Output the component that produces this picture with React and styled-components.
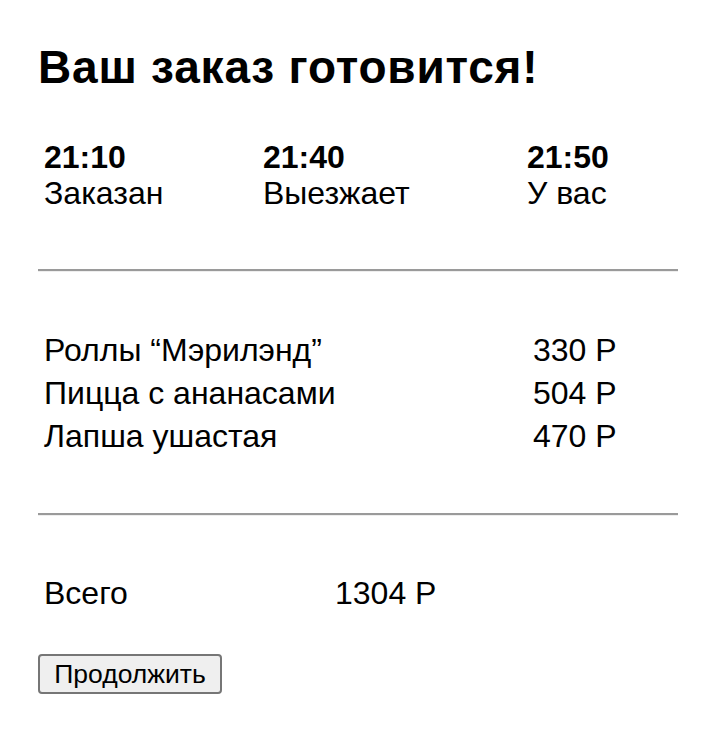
import styled, { createGlobalStyle } from "styled-components";

const GlobalStyle = createGlobalStyle`
  body {
    margin: 0;
    background: #fff;
    font-family: "Liberation Sans", Arial, sans-serif;
    color: #000;
  }
`;

const Page = styled.main`
  padding: 43px 38px 0;
  width: 640px;
`;

const Title = styled.h1`
  margin: 0 0 48px;
  font-size: 46px;
  line-height: 48px;
  letter-spacing: 0.8px;
  font-weight: bold;
`;

const Timeline = styled.div`
  display: grid;
  grid-template-columns: 219px 264px auto;
  padding-left: 6px;
  font-size: 32px;
  line-height: 36px;
`;

const Step = styled.div`
  display: flex;
  flex-direction: column;
`;

const Time = styled.b`
  font-weight: bold;
`;

const Divider = styled.hr`
  margin: ${(p) => p.$top}px 0 0;
  border: 0;
  border-top: 2px solid #9a9a9a;
  border-bottom: 1px solid #eeeeee;
  height: 0;
`;

const Rows = styled.div`
  display: grid;
  grid-template-columns: ${(p) => p.$col}px auto;
  margin-top: ${(p) => p.$top}px;
  padding-left: 6px;
  font-size: 32px;
  line-height: 43px;
`;

const Button = styled.button`
  margin-top: 39px;
  width: 184px;
  height: 40px;
  padding: 0;
  font-family: "Liberation Sans", Arial, sans-serif;
  font-size: 26.5px;
  color: #000;
  background: #efefef;
  border: 2px solid #767676;
  border-radius: 4px;
`;

const steps = [
  ["21:10", "Заказан"],
  ["21:40", "Выезжает"],
  ["21:50", "У вас"],
];

const items = [
  ["Роллы “Мэрилэнд”", "330 Р"],
  ["Пицца с ананасами", "504 Р"],
  ["Лапша ушастая", "470 Р"],
];

export default function App() {
  return (
    <>
      <GlobalStyle />
      <Page>
        <Title>Ваш заказ готовится!</Title>
        <Timeline>
          {steps.map(([t, label]) => (
            <Step key={t}>
              <Time>{t}</Time>
              <span>{label}</span>
            </Step>
          ))}
        </Timeline>
        <Divider $top={58} />
        <Rows $col={489} $top={57}>
          {items.map(([name, price]) => [
            <span key={name}>{name}</span>,
            <span key={price}>{price}</span>,
          ])}
        </Rows>
        <Divider $top={55} />
        <Rows $col={291} $top={56}>
          <span>Всего</span>
          <span>1304 Р</span>
        </Rows>
        <Button>Продолжить</Button>
      </Page>
    </>
  );
}
